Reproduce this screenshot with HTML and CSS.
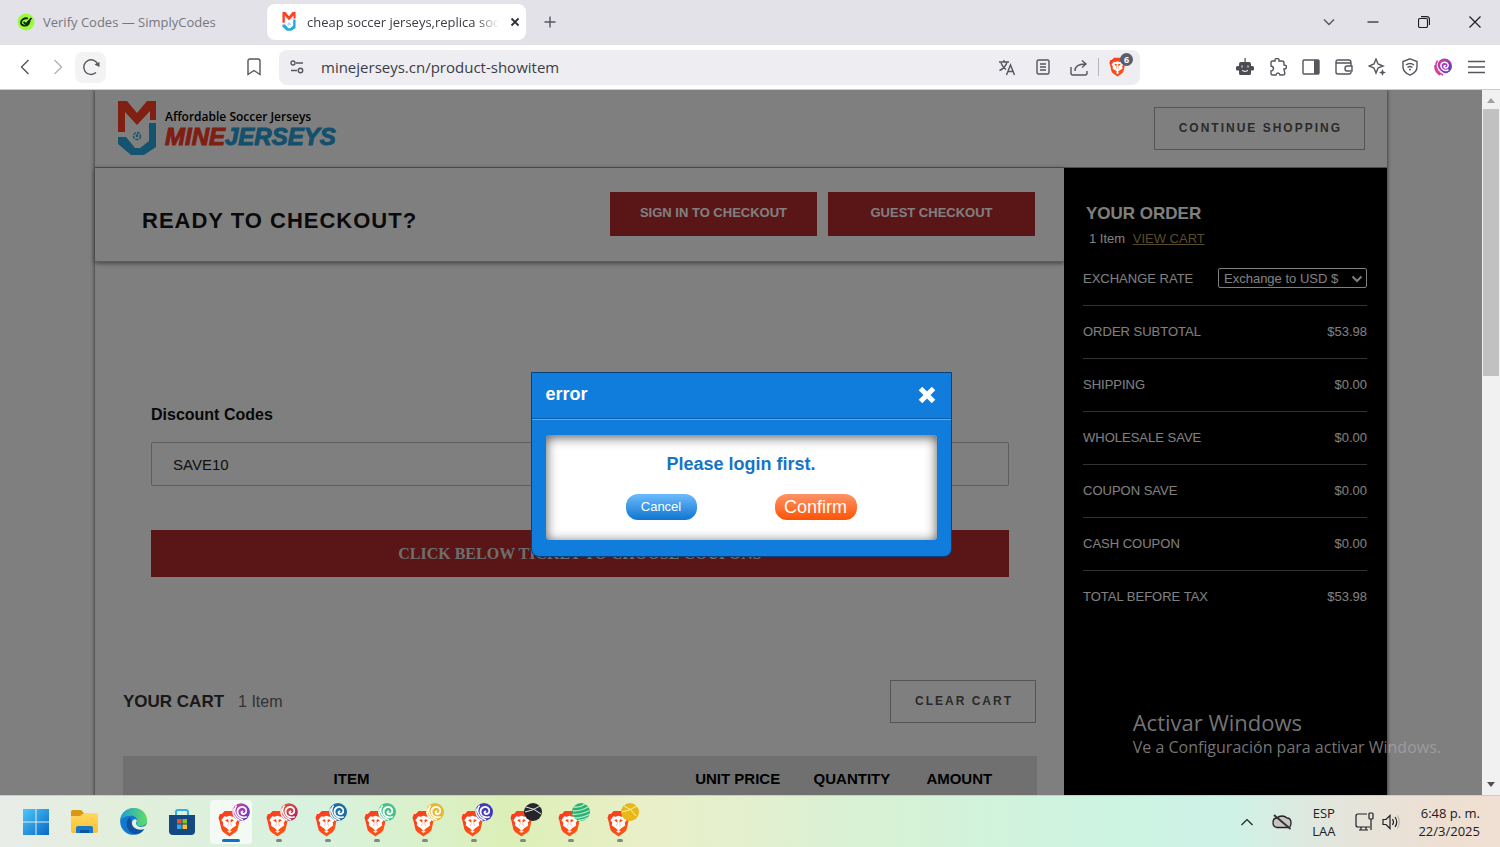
FILE: index.html
```html
<!DOCTYPE html>
<html lang="en">
<head>
<meta charset="utf-8">
<title>Checkout</title>
<link rel="stylesheet" href="styles.css">
</head>
<body>
<svg class="defs" aria-hidden="true">
  <defs>
    <linearGradient id="lion-fill" x1="0" y1="0" x2="1" y2="1"><stop offset="0" stop-color="#f83a20"/><stop offset="1" stop-color="#ff5a10"/></linearGradient>
    <linearGradient id="g-purple" x1="0" y1="0" x2="1" y2="1"><stop offset="0" stop-color="#e0409c"/><stop offset="1" stop-color="#5038c8"/></linearGradient>
    <linearGradient id="g-red" x1="0" y1="0" x2="1" y2="1"><stop offset="0" stop-color="#e8602c"/><stop offset="1" stop-color="#a81868"/></linearGradient>
    <linearGradient id="g-win" x1="0" y1="0" x2="1" y2="1"><stop offset="0" stop-color="#4cc8f8"/><stop offset="1" stop-color="#0868c8"/></linearGradient>
    <linearGradient id="g-edge" x1="0" y1="0" x2="1" y2="0"><stop offset="0" stop-color="#2098dc"/><stop offset="1" stop-color="#60e060"/></linearGradient>
    <linearGradient id="g-folder" x1="0" y1="0" x2="0" y2="1"><stop offset="0" stop-color="#ffd860"/><stop offset="1" stop-color="#fcc030"/></linearGradient>
    <symbol id="lion" viewBox="0 0 24 28">
      <path fill="url(#lion-fill)" d="M7 1h10l3 3h2l1.500 4-1 3-2 9c-1 3-5 5-8.500 7.500C8.500 25 4.500 23 3.500 20l-2-9-1-3L2 4h2z"/>
      <path fill="#fff" d="M6.500 6.500L9 7l3-1 3 1 2.500-.5 3 4-2 2.500.5 3-3.500 2.500-1.500-2-.5-3.500 3-2.500-2-1-2.500 1-2.500-1-2 1 3 2.500-.5 3.500-1.500 2L5 16l.5-3-2-2.500z"/>
      <path fill="#fff" d="M11 10h2l.5 6 2.500 2-4 3.500L8 18l2.500-2z"/>
      <path fill="#fff" d="M9.500 22l2.500-1 2.500 1-2.500 2z"/>
    </symbol>
    <symbol id="swirl" viewBox="0 0 18 18">
      <circle cx="9" cy="9" r="9" fill="currentColor"/>
      <path fill="none" stroke="#fff" stroke-width="1.800" stroke-linecap="round" d="M10.500 8.500c-1.500 0-1.500 2.500.5 2.500 3.500 0 4.500-4 2-6-3.500-2.500-8 0-7.500 4.500.5 4 5 5.500 8.500 4.500"/>
      <path fill="none" stroke="#fff" stroke-width="1.400" d="M4.500 2.500C1 7 2.500 14 11 17M1.500 5.500C0 10 2 15 7.500 17.500"/>
    </symbol>
    <symbol id="shirt" viewBox="0 0 38 55">
      <path fill="#ff4024" d="M0 0h9l10 12L29 0h9v19h-6V10L19 24 7 11v20H0z"/>
      <path fill="#28a8e0" d="M38 22v24l-12 8H13L0 43v-7h8l9 11h5l9-7V22z"/>
      <circle cx="19" cy="35" r="3.500" fill="none" stroke="#28a8e0" stroke-width="1.500" stroke-dasharray="3 1"/>
      <path d="M17.500 34l1.500-1 1.500 1-.5 2h-2z" fill="#28a8e0"/>
    </symbol>
  </defs>
</svg>

<header class="tabs">
  <button class="tab">
    <svg width="18" height="18" viewBox="0 0 18 18"><circle cx="9" cy="9" r="8.500" fill="#9bfa3c"/><path fill="none" stroke="#10240c" stroke-width="1.800" d="M14.500 5L9 11 6.500 9M11 5.500C7 4.500 4 7 4 9.500 4 13 9 13.500 11.500 11l1.500-3.500"/></svg>
    <span class="tab-name">Verify Codes — SimplyCodes</span>
  </button>
  <div class="tab tab-active">
    <svg width="14" height="19"><use href="#shirt"/></svg>
    <span class="tab-name fade">cheap soccer jerseys,replica soc</span>
    <button class="icon" aria-label="Close tab"><svg width="10" height="10" viewBox="0 0 10 10"><path class="dark" d="M1.500 1.500l7 7M8.500 1.500l-7 7"/></svg></button>
  </div>
  <button class="icon new-tab" aria-label="New tab"><svg width="12" height="12" viewBox="0 0 12 12"><path class="line" d="M6 .5v11M.5 6h11"/></svg></button>
  <div class="window-buttons">
    <button class="icon" aria-label="Search tabs"><svg width="12" height="12" viewBox="0 0 12 12"><path class="line" d="M1 3.500l5 5 5-5"/></svg></button>
    <button class="icon" aria-label="Minimize"><svg width="12" height="12" viewBox="0 0 12 12"><path class="thin" d="M.5 6h11"/></svg></button>
    <button class="icon" aria-label="Restore"><svg width="12" height="12" viewBox="0 0 12 12"><path class="thin" d="M.5 4q0-1.500 1.500-1.500h6q1.500 0 1.500 1.500v6q0 1.500-1.500 1.500h-6Q.5 11.500.5 10zM3 .6h5.500q3 0 3 3V9"/></svg></button>
    <button class="icon" aria-label="Close window"><svg width="12" height="12" viewBox="0 0 12 12"><path class="thin" d="M.5.5l11 11M11.500.5l-11 11"/></svg></button>
  </div>
</header>

<nav class="toolbar">
  <button class="icon" aria-label="Back"><svg width="10" height="16" viewBox="0 0 10 16"><path class="line" d="M8.500 1L1.500 8l7 7"/></svg></button>
  <button class="icon faint" aria-label="Forward"><svg width="10" height="16" viewBox="0 0 10 16"><path class="line" d="M1.500 1l7 7-7 7"/></svg></button>
  <button class="icon reload" aria-label="Reload"><svg width="18" height="18" viewBox="0 0 18 18"><path class="line" d="M14 14.500A7.300 7.300 0 1 1 16 7"/><path fill="#56565e" d="M12.500 6.500l5-2.500v5z"/></svg></button>
  <button class="icon bookmark" aria-label="Bookmark"><svg width="14" height="18" viewBox="0 0 14 18"><path class="line" d="M1 3q0-2 2-2h8q2 0 2 2v13.500l-6-4-6 4z"/></svg></button>
  <div class="address">
    <button class="icon" aria-label="Site settings"><svg width="14" height="14" viewBox="0 0 14 14"><path class="line" d="M6 3h7M1 10.500h6"/><circle class="line" cx="3" cy="3" r="2"/><circle class="line" cx="10.500" cy="10.500" r="2.200"/></svg></button>
    <input class="url" aria-label="Address" value="minejerseys.cn/product-showitem">
    <button class="icon" aria-label="Translate"><svg width="18" height="17" viewBox="0 0 18 17"><path class="line" d="M1 3h10M6 1v2M9 3c-1 4-4 7-7.500 8.500M3 4c1 3 3 5 5 6.500M8.500 16l4-10 4 10M10 12.500h5.500"/></svg></button>
    <button class="icon" aria-label="Reader"><svg width="14" height="16" viewBox="0 0 14 16"><rect class="line" x="1" y="1" width="12" height="14" rx="1.500"/><path class="line" d="M4 5h6M4 8h6M4 11h6"/></svg></button>
    <button class="icon" aria-label="Share"><svg width="18" height="17" viewBox="0 0 18 17"><path class="line" d="M1 8v6q0 2 2 2h12q2 0 2-2v-2M5 12c0-5 4-7 10-7M12 1.500L16 5l-4 3.500"/></svg></button>
    <span class="split"></span>
    <button class="icon shield" aria-label="Shields"><svg width="17" height="20"><use href="#lion"/></svg><span class="count">6</span></button>
  </div>
  <div class="extensions">
    <button class="icon" aria-label="Assistant"><svg width="18" height="18" viewBox="0 0 18 18"><path fill="#4c4c54" d="M8.500 0h1.200v4H13q2 0 2 2v2h1.500q1.500 0 1.500 1.500v2q0 1-1.500 1H15V15q0 2-1 2H4q-1 0-1-2v-2.500H1.500Q0 12.500 0 11.500v-2Q0 8 1.500 8H3V6q0-2 2-2h3.500z"/><path fill="none" stroke="#fff" d="M6 7.500v2M12 7.500v2M6 12.500q3 2 6 0"/></svg></button>
    <button class="icon" aria-label="Extensions"><svg width="18" height="18" viewBox="0 0 18 18"><path class="line" d="M2 4.500Q2 3 3.500 3H6q-.5-2.500 2-2.500T10 3h3q2 0 2 2v2q2.500 0 2.500 2T15 11v1q2 5-1 5h-3q-.5-2-2-2t-2 2H3.500Q2 17 2 15.500V13q2.500-.5 2.500-2.500T2 8z"/></svg></button>
    <button class="icon" aria-label="Sidebar"><svg width="18" height="16" viewBox="0 0 18 16"><rect class="line" x="1" y="1" width="16" height="14" rx="1"/><path fill="#56565e" d="M12 1h5v14h-5z"/></svg></button>
    <button class="icon" aria-label="Wallet"><svg width="18" height="16" viewBox="0 0 18 16"><path class="line" d="M1 3v10q0 2 2 2h11q2 0 2-2M1 3q0-2 2-2h11q2 0 2 3H3Q1 4 1 3M16 4v3M12 7h5v5h-5q-2 0-2-2.500T12 7z"/></svg></button>
    <button class="icon" aria-label="Leo"><svg width="18" height="18" viewBox="0 0 18 18"><path class="line" d="M8 1l2 5 5 2-5 2-2 5-2-5-5-2 5-2z"/><path fill="#56565e" d="M14.500 11l1 2.500 2.500 1-2.500 1-1 2.500-1-2.500-2.500-1 2.500-1z"/></svg></button>
    <button class="icon" aria-label="VPN"><svg width="16" height="18" viewBox="0 0 16 18"><path class="line" d="M8 .8l7 2.700v5.500c0 4-3 6.500-7 8.200C4 15.500 1 13 1 9V3.500zM4 7q4-3 8 0M5.500 9.500q2.500-2 5 0"/><circle cx="8" cy="11.500" r="1" fill="#56565e"/></svg></button>
    <button class="icon" aria-label="Profile"><svg width="18" height="18" viewBox="0 0 18 18"><circle cx="10.500" cy="8" r="7.500" fill="url(#g-purple)"/><path fill="none" stroke="#fff" stroke-width="1.500" stroke-linecap="round" d="M11.500 7.500c-2 0-2 2.500 0 2.500 3 0 3.500-3.500 1.500-5C10 3 6.500 5 7 8.500c.5 4 4.500 4.500 7 3.500"/><path fill="none" stroke="#fff" stroke-width="1.300" d="M5 1.500C1 6 3 13 11 16"/><path fill="none" stroke="#d83890" stroke-width="1.400" d="M3.500 2.500C0 8 3 14.500 9 17M1 7c-.5 4 2 8 5 10"/></svg></button>
    <button class="icon" aria-label="Menu"><svg width="17" height="14" viewBox="0 0 17 14"><path class="line" d="M0 1.500h17M0 7h17M0 12.500h17"/></svg></button>
  </div>
</nav>

<div class="viewport">
  <div class="site">
    <div class="shop">
      <header class="brand-bar">
        <a class="brand" href="#">
          <svg width="38" height="55"><use href="#shirt"/></svg>
          <span class="brand-text">
            <span class="slogan">Affordable Soccer Jerseys</span>
            <span class="brand-name"><span class="mine">MINE</span>JERSEYS</span>
          </span>
        </a>
        <button class="outline continue">CONTINUE SHOPPING</button>
      </header>
      <div class="columns">
        <main class="checkout">
          <section class="ready">
            <h1>READY TO CHECKOUT?</h1>
            <button class="solid">SIGN IN TO CHECKOUT</button>
            <button class="solid">GUEST CHECKOUT</button>
          </section>
          <div class="sheet">
            <form class="discount">
              <label for="code">Discount Codes</label>
              <input id="code" type="text" value="SAVE10">
              <button class="ticket" type="button">CLICK BELOW TICKET TO CHOOSE COUPONS</button>
            </form>
            <section class="cart">
              <div class="cart-head">
                <h2>YOUR CART</h2><span class="cart-count">1 Item</span>
                <button class="outline clear">CLEAR CART</button>
              </div>
              <table>
                <thead><tr><th class="c-item">ITEM</th><td class="c-gap"></td><th class="c-unit">UNIT PRICE</th><th class="c-qty">QUANTITY</th><th class="c-amount">AMOUNT</th><td></td></tr></thead>
              </table>
            </section>
          </div>
        </main>
        <aside class="order">
          <h2>YOUR ORDER</h2>
          <p>1 Item <a href="#">VIEW CART</a></p>
          <div class="row"><label for="rate">EXCHANGE RATE</label>
            <span class="select-wrap"><select id="rate"><option>Exchange to USD $</option></select><svg width="12" height="8" viewBox="0 0 12 8"><path d="M1.500 1.500L6 6l4.500-4.500" fill="none" stroke="#fff" stroke-width="2"/></svg></span></div>
          <div class="row"><span>ORDER SUBTOTAL</span><span>$53.98</span></div>
          <div class="row"><span>SHIPPING</span><span>$0.00</span></div>
          <div class="row"><span>WHOLESALE SAVE</span><span>$0.00</span></div>
          <div class="row"><span>COUPON SAVE</span><span>$0.00</span></div>
          <div class="row"><span>CASH COUPON</span><span>$0.00</span></div>
          <div class="row"><span>TOTAL BEFORE TAX</span><span>$53.98</span></div>
        </aside>
      </div>
    </div>
    <div class="backdrop">
      <div class="dialog" role="dialog" aria-labelledby="dialog-title">
        <div class="dialog-head">
          <h2 id="dialog-title">error</h2>
          <button class="icon" aria-label="Close"><svg width="20" height="20" viewBox="0 0 20 20"><path d="M3.500 3.500l13 13M16.500 3.500l-13 13" stroke="#fff" stroke-width="5"/></svg></button>
        </div>
        <div class="dialog-body">
          <p>Please login first.</p>
          <div class="dialog-actions">
            <button class="pill cancel">Cancel</button>
            <button class="pill confirm">Confirm</button>
          </div>
        </div>
      </div>
    </div>
    <div class="activate">
      <strong>Activar Windows</strong>
      <span>Ve a Configuración para activar Windows.</span>
    </div>
  </div>
  <div class="scrollbar">
    <svg width="8" height="5" viewBox="0 0 8 5"><path d="M0 5l4-5 4 5z" fill="#a0a0a0"/></svg>
    <div class="track"><div class="thumb"></div></div>
    <svg width="8" height="5" viewBox="0 0 8 5"><path d="M0 0l4 5 4-5z" fill="#505050"/></svg>
  </div>
</div>

<footer class="taskbar">
  <div class="apps">
    <button class="app" aria-label="Start"><svg width="26" height="26" viewBox="0 0 26 26"><path fill="url(#g-win)" d="M0 0h12.500v12.500H0zM13.500 0H26v12.500H13.500zM0 13.500h12.500V26H0zM13.500 13.500H26V26H13.500z"/></svg></button>
    <button class="app" aria-label="Files"><svg width="28" height="24" viewBox="0 0 28 24"><path fill="#d89810" d="M0 2q0-2 2-2h8l3 3v4H0z"/><path fill="url(#g-folder)" d="M0 6h9l4-3h12q2 0 2 2v16q0 2-2 2H2q-2 0-2-2z"/><path fill="#1878c8" d="M5 23v-5q0-2 2-2h13q2 0 2 2v5z"/><path fill="#0c58a0" d="M9 20h9v3H9z"/></svg></button>
    <button class="app" aria-label="Edge"><svg width="27" height="27" viewBox="0 0 27 27"><circle cx="13.500" cy="13.500" r="13.300" fill="#1478cc"/><path fill="url(#g-edge)" d="M0 13C1 4 7 0 14 0c8 0 13 6 13 12 0 5-4 7-9 6-2-1-2-2-1-4 1-4-3-7-7-6-5 0-8 2-10 5z"/><path fill="#1050a0" d="M10 9c-6 5-3 16 5 17 5 0 8-3 10-6-7 3-14-1-14-7z"/><path fill="#e4f0e0" d="M17 13c-2 2-1 5 3 6 3 0 6-1 7-3v3l-2 2c-7 2-13-1-13-6 0-4 4-5 5-2z"/></svg></button>
    <button class="app" aria-label="Store"><svg width="26" height="26" viewBox="0 0 26 26"><path fill="#144880" d="M0 6h26v16q0 4-4 4H4q-4 0-4-4z"/><path fill="none" stroke="#30b0e8" stroke-width="2" d="M7 6V3q0-2 2-2h8q2 0 2 2v3"/><path fill="#f05030" d="M8 10h4.500v4.500H8z"/><path fill="#80c030" d="M13.500 10H18v4.500h-4.500z"/><path fill="#30a8f0" d="M8 15.500h4.500V20H8z"/><path fill="#ffc020" d="M13.500 15.500H18V20h-4.500z"/></svg></button>
    <button class="app app-open app-active" aria-label="Brave 1"><svg width="32" height="34" viewBox="0 0 32 34"><use href="#lion" y="7" width="23" height="27"/><circle cx="23" cy="9" r="8.800" fill="url(#g-purple)"/><use class="clear-ball" href="#swirl" x="14" width="18" height="18"/></svg></button>
    <button class="app app-open" aria-label="Brave 2"><svg width="32" height="34" viewBox="0 0 32 34"><use href="#lion" y="7" width="23" height="27"/><circle cx="23" cy="9" r="8.800" fill="url(#g-red)"/><use class="clear-ball" href="#swirl" x="14" width="18" height="18"/></svg></button>
    <button class="app app-open" aria-label="Brave 3"><svg width="32" height="34" viewBox="0 0 32 34"><use href="#lion" y="7" width="23" height="27"/><use color="#1c6ca8" href="#swirl" x="14" width="18" height="18"/></svg></button>
    <button class="app app-open" aria-label="Brave 4"><svg width="32" height="34" viewBox="0 0 32 34"><use href="#lion" y="7" width="23" height="27"/><use color="#48c088" href="#swirl" x="14" width="18" height="18"/></svg></button>
    <button class="app app-open" aria-label="Brave 5"><svg width="32" height="34" viewBox="0 0 32 34"><use href="#lion" y="7" width="23" height="27"/><use color="#e8b830" href="#swirl" x="14" width="18" height="18"/></svg></button>
    <button class="app app-open" aria-label="Brave 6"><svg width="32" height="34" viewBox="0 0 32 34"><use href="#lion" y="7" width="23" height="27"/><use color="#4438b8" href="#swirl" x="14" width="18" height="18"/></svg></button>
    <button class="app app-open" aria-label="Brave 7"><svg width="32" height="34" viewBox="0 0 32 34"><use href="#lion" y="7" width="23" height="27"/><circle cx="23" cy="9" r="9" fill="#24262c"/><path d="M15 9q7-1 15-6M16 4q8 1 15 7" fill="none" stroke="#e8e8e8"/></svg></button>
    <button class="app app-open" aria-label="Brave 8"><svg width="32" height="34" viewBox="0 0 32 34"><use href="#lion" y="7" width="23" height="27"/><circle cx="23" cy="9" r="9" fill="#30b070"/><path d="M16 4q6 1 11-3M15 8q8 0 15-4M14.500 11.500q9 0 17-4M16 15q8 0 16-4M20 17.500q5 0 10-3" fill="none" stroke="#b0f0c8" stroke-width="1.300"/></svg></button>
    <button class="app app-open" aria-label="Brave 9"><svg width="32" height="34" viewBox="0 0 32 34"><use href="#lion" y="7" width="23" height="27"/><circle cx="23" cy="9" r="9" fill="#e8b818"/><path d="M15 9q7-1 15-6M17 3q7 2 12 10" fill="none" stroke="#fff0a0"/></svg></button>
  </div>
  <div class="tray">
    <button class="icon" aria-label="Hidden icons"><svg width="12" height="8" viewBox="0 0 12 8"><path class="thin" d="M.5 7L6 1.500 11.500 7"/></svg></button>
    <button class="icon" aria-label="Cloud sync off"><svg width="20" height="16" viewBox="0 0 20 16"><path fill="#c8c4c4" stroke="#202020" stroke-width="1.300" d="M5 13.500Q1 13 1 8.500T5 4q2-2 5-2t5 2q4 0 4 5t-4 4.500z"/><path class="dark" d="M2 1l16.500 14"/></svg></button>
    <span class="lang">ESP<br>LAA</span>
    <button class="icon net" aria-label="Network"><svg width="19" height="19" viewBox="0 0 19 19"><path class="thin" d="M12 2H3Q1 2 1 4v9q0 2 2 2h12M6 15v3M11 15v3M4 18h9M16 7v11"/><rect class="thin" x="14" y="1" width="4" height="6" rx="1"/></svg></button>
    <button class="icon" aria-label="Volume"><svg width="18" height="16" viewBox="0 0 18 16"><path class="thin" d="M1 5.500h3l4-4v13l-4-4H1zM10.500 5q2 3 0 6M13 3q3.500 5 0 10"/><path fill="none" stroke="#aaa" d="M15.500 1.500q3.500 6.500 0 13"/></svg></button>
    <time class="clock">6:48 p. m.<br>22/3/2025</time>
  </div>
</footer>
</body>
</html>
```
FILE: styles.css
```css
* { box-sizing: border-box; }

body {
  margin: 0;
  height: 100vh;
  display: flex;
  flex-direction: column;
  overflow: hidden;
  font-family: "Liberation Sans", Arial, sans-serif;
}

button, input, select { font: inherit; color: inherit; margin: 0; }
h1, h2, p { margin: 0; }
svg { display: block; flex: none; }

.defs { position: absolute; width: 0; height: 0; }

.icon {
  display: flex;
  align-items: center;
  justify-content: center;
  padding: 0;
  border: 0;
  background: none;
}

.line { fill: none; stroke: #56565e; stroke-width: 1.4; }
.thin { fill: none; stroke: #202024; stroke-width: 1.2; }
.dark { fill: none; stroke: #303036; stroke-width: 1.8; }
.faint { opacity: 0.45; }

/* Browser frame */
.tabs {
  display: flex;
  align-items: center;
  height: 45px;
  padding: 0 19px 1px 8px;
  background: #e3e2e8;
  font: 13px "Open Sans", sans-serif;
}

.tab {
  display: flex;
  align-items: center;
  gap: 8px;
  width: 259px;
  height: 36px;
  padding: 0 12px 1px 9px;
  border: 0;
  border-radius: 8px;
  background: none;
  color: #77777d;
}

.tab-active {
  gap: 11px;
  padding: 0 12px 1px 15px;
  background: #fff;
  color: #3c3c42;
}

.tab-name { flex: 1; text-align: left; white-space: nowrap; }
.fade { mask-image: linear-gradient(90deg, #000 88%, transparent); }
.new-tab { margin-left: 18px; }

.window-buttons { display: flex; gap: 39px; margin-left: auto; }
.window-buttons .icon:first-child { margin-right: -7px; }

.toolbar {
  display: flex;
  align-items: center;
  height: 45px;
  padding: 0 15px 0 20px;
  border-bottom: 1px solid #ccc;
  background: #fff;
}

.toolbar > .faint { margin-left: 23px; }
.reload { width: 31px; height: 31px; margin-left: 12px; border-radius: 8px; background: #f3f3f4; }
.bookmark { margin: 0 18px 0 141px; }

.address {
  display: flex;
  align-items: center;
  flex: 0 1 861px;
  gap: 20px;
  height: 35px;
  padding: 0 7px 0 11px;
  border-radius: 8px;
  background: #ededf2;
}

.url {
  flex: 1;
  min-width: 0;
  margin-left: -3px;
  padding: 0;
  border: 0;
  background: none;
  color: #3c3c44;
  font: 15px "Open Sans", sans-serif;
}

.split { width: 1px; height: 18px; margin: 0 -10px; background: #b4b4bc; }
.shield { position: relative; width: 24px; justify-content: flex-start; }

.count {
  position: absolute;
  top: -4px;
  right: 0;
  width: 13px;
  height: 13px;
  border-radius: 50%;
  background: #5c5c6c;
  color: #fff;
  font: bold 9px/13px "Noto Sans", sans-serif;
  text-align: center;
}

.extensions { display: flex; gap: 15px; margin-left: auto; }
.extensions .icon { width: 18px; }

/* Page area */
.viewport { display: flex; flex: 1; min-height: 0; }
.site { position: relative; flex: 1; overflow: hidden; background: #fff; }
.shop { max-width: 1292px; margin: 0 auto; box-shadow: 0 0 4px #444; }

.brand-bar {
  display: flex;
  align-items: center;
  justify-content: space-between;
  height: 78px;
  padding: 0 22px 0 23px;
  border-bottom: 1px solid #999;
}

.brand { display: flex; align-items: center; gap: 9px; text-decoration: none; }
.brand-text { display: flex; flex-direction: column; }
.slogan { color: #000; font: 600 12px/16px "Open Sans", sans-serif; }
.brand-name { color: #28a0d8; font-size: 24px; font-style: italic; font-weight: bold; line-height: 24px; -webkit-text-stroke: 1px currentColor; }
.mine { color: #ff3c24; }

.outline {
  height: 43px;
  padding: 0 22px 2px 24px;
  border: 1px solid #aaa;
  background: none;
  color: #555;
  font-size: 12px;
  font-weight: bold;
  letter-spacing: 2px;
}

.columns { display: grid; grid-template-columns: 3fr 1fr; }

.ready {
  display: flex;
  align-items: center;
  gap: 11px;
  height: 94px;
  padding: 0 29px 2px 47px;
  border-bottom: 1px solid #bbb;
  box-shadow: 0 1px 5px #777;
}

.ready h1 { flex: 1; padding-top: 14px; color: #151515; font-size: 22px; letter-spacing: 1px; }

.solid {
  width: 207px;
  height: 44px;
  padding: 0 0 3px;
  border: 0;
  background: #b52a2e;
  color: #fff;
  font-size: 13px;
  font-weight: bold;
}

.sheet { padding: 143px 27px 0 28px; }

.discount { display: flex; flex-direction: column; padding: 0 28px; }
.discount label { color: #111; font-size: 16px; font-weight: bold; line-height: 20px; }

.discount input {
  height: 44px;
  margin: 17px 0 44px;
  padding: 0 21px;
  border: 1px solid #bbb;
  border-radius: 2px;
  background: #fff;
  color: #222;
  font-size: 15px;
}

.ticket {
  height: 47px;
  border: 0;
  background: #b52a2e;
  color: #ddd;
  font: bold 16px "Liberation Serif", serif;
}

.cart { padding-top: 103px; }
.cart-head { display: flex; align-items: center; gap: 14px; padding-right: 1px; }
.cart-head h2 { color: #333; font-size: 17px; }
.cart-count { flex: 1; color: #666; font-size: 16px; }

.cart table { width: 100%; margin-top: 33px; border-collapse: collapse; table-layout: fixed; background: #e0e0e0; }
.cart th, .cart td { height: 44px; padding: 0; color: #000; font-size: 15px; text-align: center; }
.c-item { width: 50%; }
.c-gap { width: 11%; }
.c-unit, .c-qty { width: 12.5%; }
.c-amount { width: 11%; }

.order { padding: 35px 20px 230px 19px; background: #000; color: #fff; font-size: 13px; }
.order h2 { padding-left: 3px; font-size: 17px; line-height: 22px; }
.order p { padding: 5px 6px; line-height: 18px; }
.order a { margin-left: 4px; color: #b09858; }

.row {
  display: flex;
  align-items: center;
  justify-content: space-between;
  height: 53px;
  padding-bottom: 2px;
  border-bottom: 1px solid #666;
}

.row:last-child { border-bottom: 0; }

.select-wrap { position: relative; }
.select-wrap svg { position: absolute; right: 4px; top: 7px; }

.row select {
  width: 149px;
  height: 20px;
  padding: 0 5px;
  appearance: none;
  border: 1px solid #fff;
  border-radius: 2px;
  background: #000;
}

.backdrop {
  position: absolute;
  inset: 0;
  display: flex;
  align-items: flex-start;
  justify-content: center;
  padding-top: 282px;
  background: rgba(0, 0, 0, 0.5);
}

.dialog {
  width: 421px;
  border: 1px solid #08407c;
  border-radius: 0 0 8px 8px;
  background: #107cdc;
}

.dialog-head {
  display: flex;
  align-items: center;
  justify-content: space-between;
  height: 46px;
  padding: 0 14px 2px;
  border-bottom: 1px solid #085cac;
  box-shadow: 0 1px #58acf4;
  color: #fff;
}

.dialog-head h2 { font-size: 18px; }

.dialog-body {
  margin: 16px 14px;
  padding: 18px 0 20px;
  border-radius: 4px;
  background: #fff;
  box-shadow: inset 0 2px 12px #555;
  text-align: center;
}

.dialog-body p { color: #1474c8; font-size: 18px; font-weight: bold; line-height: 22px; }
.dialog-actions { display: flex; justify-content: center; align-items: center; gap: 78px; margin-top: 19px; }

.pill { height: 26px; padding: 0; border: 0; border-radius: 12px; color: #fff; line-height: 26px; }
.cancel { width: 71px; background: linear-gradient(#6cbcfc, #1074d0); font-size: 13px; }
.confirm { width: 82px; background: linear-gradient(#fc9468, #fc5404); font-size: 18px; }

.activate {
  position: absolute;
  right: 41px;
  bottom: 37px;
  display: flex;
  flex-direction: column;
  color: rgba(170, 170, 170, 0.7);
  font: 16px/22px "Open Sans", sans-serif;
}

.activate strong { font-size: 22px; font-weight: normal; line-height: 28px; }

.scrollbar {
  display: flex;
  flex-direction: column;
  align-items: center;
  gap: 6px;
  width: 18px;
  padding: 8px 1px;
  background: #f1f1f1;
}

.track { flex: 1; width: 100%; }
.thumb { height: 40%; background: #c1c1c1; }

/* Desktop taskbar */
.taskbar {
  display: flex;
  align-items: center;
  justify-content: space-between;
  height: 52px;
  padding: 0 20px 0 15px;
  border-top: 1px solid #ccc;
  background: linear-gradient(90deg, #e9ece9, #e2efdb 8%, #d8f2df 21%, #dcefb8 34%, #eaefc8 43%, #e3f0cf 50%, #d8f2d5 58%, #cdf4e2 74%, #cef2e7 82%, #e3e5dc 89%, #eedfd3 96%, #f0dfd4);
}

.apps { display: flex; justify-content: space-between; width: 626px; }

.app {
  position: relative;
  display: flex;
  align-items: center;
  justify-content: center;
  width: 42px;
  height: 44px;
  padding: 0;
  border: 0;
  border-radius: 4px;
  background: none;
}

.app-open { align-items: flex-start; padding: 3px 0 0 6px; }
.app-open::after {
  content: "";
  position: absolute;
  bottom: 2px;
  left: 18px;
  width: 6px;
  height: 3px;
  border-radius: 2px;
  background: #808880;
}

.app-active { background: rgba(255, 255, 255, 0.65); }
.app-active::after { left: 12px; width: 18px; background: #1070c8; }
.clear-ball { color: transparent; }

.tray { display: flex; align-items: center; color: #202024; font: 13px/18px "Open Sans", sans-serif; }
.tray > .icon + .icon { margin-left: 19px; }
.lang { margin: 0 20px; text-align: center; }
.tray > .net + .icon { margin-left: 8px; }
.clock { margin-left: 18px; text-align: right; }
```
